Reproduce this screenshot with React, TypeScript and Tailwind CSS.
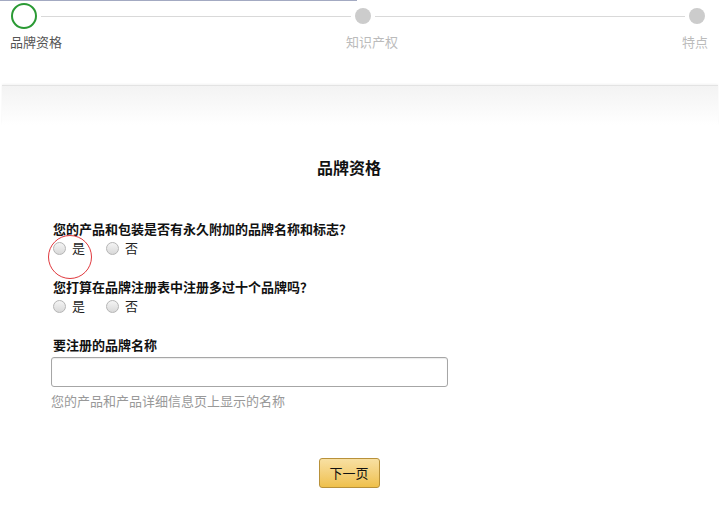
const font = { fontFamily: '"Noto Sans CJK SC", "Liberation Sans", sans-serif' };

function Radio({ label }: { label: string }) {
  return (
    <span className="inline-flex items-center">
      <span className="h-[13px] w-[13px] rounded-full border border-[#b5b5b5] bg-gradient-to-b from-[#f4f4f4] to-[#d9d9d9]" />
      <span className="ml-[6px] text-[13px] text-[#222]">{label}</span>
    </span>
  );
}

function RadioRow() {
  return (
    <div className="mt-px flex h-[18px] items-center gap-[21px] pl-[2px]">
      <Radio label="是" />
      <Radio label="否" />
    </div>
  );
}

export default function App() {
  return (
    <div className="relative h-[510px] w-[720px] overflow-hidden bg-white" style={font}>
      {/* header */}
      <div className="h-[85px]">
        <div className="h-px w-[357px] bg-[#a3aac2]" />
        <div className="mt-[2px] flex items-center pl-[11px] pr-[15px]">
          <span className="h-[26px] w-[26px] rounded-full border-[2.5px] border-[#2a9a34]" />
          <span className="mx-[4px] h-px flex-1 bg-[#d9d9d9]" />
          <span className="h-[16px] w-[16px] rounded-full bg-[#cccccc]" />
          <span className="mx-[4px] h-px flex-1 bg-[#d9d9d9]" />
          <span className="h-[16px] w-[16px] rounded-full bg-[#cccccc]" />
        </div>
        <div className="mt-[4px] flex justify-between pl-[10px] pr-[12px] text-[13px] leading-[18px]">
          <span className="text-[#555]">品牌资格</span>
          <span className="text-[#bbb]">知识产权</span>
          <span className="text-[#bbb]">特点</span>
        </div>
      </div>
      <div className="mx-[2px] h-[40px] border-t border-[#e3e3e3] bg-gradient-to-b from-[#f3f3f3] to-white shadow-[0_-1px_2px_rgba(0,0,0,0.05)]" />

      {/* form */}
      <div className="ml-[51px] w-[596px]">
        <h1 className="mt-[30px] text-center text-[16px] font-bold leading-[24px] text-[#111]">品牌资格</h1>

        <p className="mt-[41px] pl-[2px] text-[13px] font-bold leading-[18px] text-[#111]">您的产品和包装是否有永久附加的品牌名称和标志？</p>
        <RadioRow />

        <p className="mt-[21px] pl-[2px] text-[13px] font-bold leading-[18px] text-[#111]">您打算在品牌注册表中注册多过十个品牌吗？</p>
        <RadioRow />

        <p className="mt-[21px] pl-[2px] text-[13px] font-bold leading-[18px] text-[#111]">要注册的品牌名称</p>
        <input className="mt-[3px] block h-[30px] w-[397px] rounded-[3px] border border-[#a6a6a6] bg-white px-2 text-[13px] shadow-[inset_0_1px_1px_rgba(0,0,0,0.08)] outline-none" />
        <p className="mt-[5px] text-[13px] leading-[18px] text-[#999]">您的产品和产品详细信息页上显示的名称</p>

        <div className="mt-[48px] flex justify-center">
          <button className="h-[30px] w-[61px] rounded-[3px] border border-[#b8913a] bg-gradient-to-b from-[#f8e0a2] to-[#efc04a] text-[13px] text-[#111]">
            下一页
          </button>
        </div>
      </div>

      {/* annotation */}
      <span className="absolute left-[48px] top-[235px] h-[44px] w-[44px] rounded-full border border-[#e0393e]" />
    </div>
  );
}
